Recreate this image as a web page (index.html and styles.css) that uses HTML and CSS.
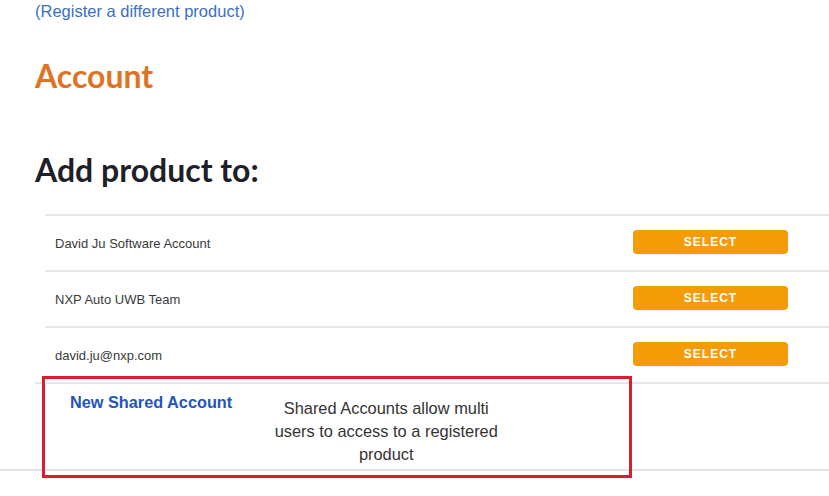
FILE: index.html
```html
<!DOCTYPE html>
<html>
<head>
<meta charset="utf-8">
<link rel="stylesheet" href="styles.css">
</head>
<body>
<div class="page">
  <a class="reg-link" href="#">(Register a different product)</a>
  <h1 class="account-title">Account</h1>
  <h2 class="add-title">Add product to:</h2>
  <div class="list">
    <div class="row"><span class="name">David Ju Software Account</span><button class="select">SELECT</button></div>
    <div class="row"><span class="name">NXP Auto UWB Team</span><button class="select">SELECT</button></div>
    <div class="row"><span class="name">david.ju@nxp.com</span><button class="select">SELECT</button></div>
  </div>
  <div class="shared">
    <div class="shared-inner">
      <a class="new-shared" href="#">New Shared Account</a>
      <p class="shared-desc">Shared Accounts allow multi users to access to a registered product</p>
    </div>
    <div class="highlight"></div>
  </div>
</div>
</body>
</html>
```
FILE: styles.css
```css
html, body { margin: 0; padding: 0; background: #fff; }
body { min-height: 496px; }
.page { position: relative; font-family: "Liberation Sans", Arial, sans-serif; }
.reg-link {
  display: block;
  margin: 2px 0 0 35px;
  font-size: 16.5px;
  line-height: 19px;
  color: #3b6fbf;
  text-decoration: none;
}
.account-title {
  margin: 36px 0 0 35px;
  font-family: Lato, sans-serif;
  font-weight: 700;
  font-size: 32px;
  line-height: 37px;
  color: #e07224;
}
.add-title {
  margin: 57px 0 0 35px;
  font-family: Lato, sans-serif;
  font-weight: 700;
  font-size: 32px;
  line-height: 37px;
  color: #1f1f29;
}
.list { margin: 26px 0 0 45px; }
.row {
  display: flex;
  align-items: center;
  justify-content: space-between;
  height: 54px;
  border-top: 2px solid #e7e7ea;
  padding: 0 41px 0 10px;
}
.name { font-size: 13px; color: #3a3a3a; }
.select {
  width: 155px;
  height: 24px;
  margin-top: -2px;
  border: none;
  border-radius: 4px;
  background: #f59b06;
  color: #fff;
  font-family: "Liberation Sans", Arial, sans-serif;
  font-weight: 700;
  font-size: 12px;
  letter-spacing: 1px;
  padding: 0;
}
.shared {
  position: relative;
  border-bottom: 2px solid #e2e3e8;
}
.shared-inner {
  display: flex;
  align-items: flex-start;
  margin-left: 35px;
  height: 85px;
  border-top: 2px solid #e7e7ea;
}
.new-shared {
  margin: 9px 0 0 35px;
  font-size: 16.3px;
  font-weight: 700;
  color: #2456b8;
  text-decoration: none;
}
.shared-desc {
  margin: 13px 0 0 34px;
  width: 240px;
  text-align: center;
  font-size: 16.4px;
  line-height: 23px;
  color: #333;
}
.highlight {
  position: absolute;
  left: 42px;
  top: -6px;
  width: 584px;
  height: 96px;
  border: 3px solid #d61f2f;
  pointer-events: none;
}
```
